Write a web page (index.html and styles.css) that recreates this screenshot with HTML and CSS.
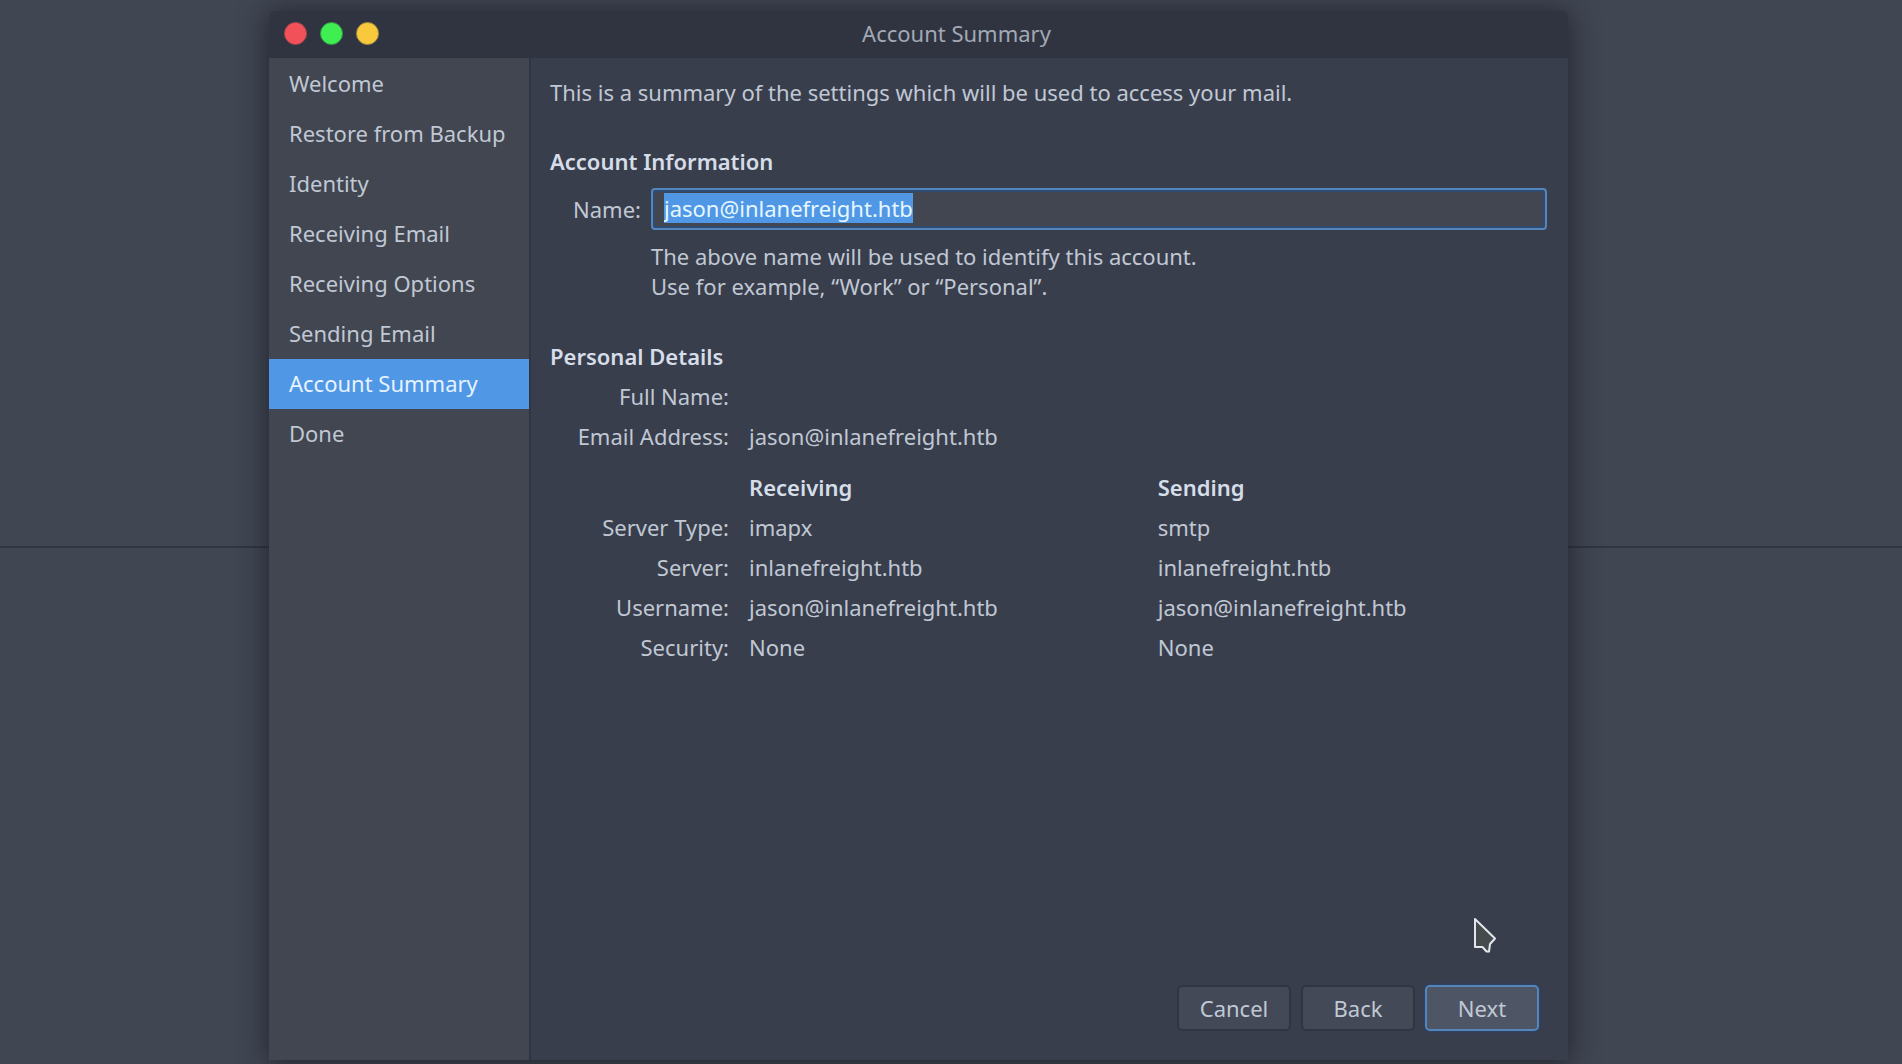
FILE: index.html
```html
<!DOCTYPE html>
<html lang="en">
<head>
<meta charset="utf-8">
<title>Account Summary</title>
<link rel="stylesheet" href="styles.css">
</head>
<body>
<div class="desktop">
  <main class="window">
    <header class="titlebar">
      <div class="controls">
        <button class="control close" aria-label="Close"></button>
        <button class="control zoom" aria-label="Maximize"></button>
        <button class="control minimize" aria-label="Minimize"></button>
      </div>
      <h1 class="title">Account Summary</h1>
    </header>
    <div class="body">
      <nav class="sidebar">
        <a class="step" href="#welcome">Welcome</a>
        <a class="step" href="#restore">Restore from Backup</a>
        <a class="step" href="#identity">Identity</a>
        <a class="step" href="#receiving">Receiving Email</a>
        <a class="step" href="#options">Receiving Options</a>
        <a class="step" href="#sending">Sending Email</a>
        <a class="step active" href="#summary" aria-current="step">Account Summary</a>
        <a class="step" href="#done">Done</a>
      </nav>
      <form class="content">
        <p class="intro">This is a summary of the settings which will be used to access your mail.</p>
        <h2 class="heading">Account Information</h2>
        <div class="field">
          <label class="field-label" for="name">Name:</label>
          <input class="field-input" id="name" type="text" value="jason@inlanefreight.htb" spellcheck="false" autofocus>
          <p class="hint">The above name will be used to identify this account.<br>Use for example, “Work” or “Personal”.</p>
        </div>
        <h2 class="heading">Personal Details</h2>
        <table class="details">
          <tr><th class="label" scope="row">Full Name:</th><td></td></tr>
          <tr><th class="label" scope="row">Email Address:</th><td>jason@inlanefreight.htb</td></tr>
        </table>
        <table class="details servers">
          <tr><td class="label"></td><th class="column receiving" scope="col">Receiving</th><th class="column" scope="col">Sending</th></tr>
          <tr><th class="label" scope="row">Server Type:</th><td>imapx</td><td>smtp</td></tr>
          <tr><th class="label" scope="row">Server:</th><td>inlanefreight.htb</td><td>inlanefreight.htb</td></tr>
          <tr><th class="label" scope="row">Username:</th><td>jason@inlanefreight.htb</td><td>jason@inlanefreight.htb</td></tr>
          <tr><th class="label" scope="row">Security:</th><td>None</td><td>None</td></tr>
        </table>
        <div class="actions">
          <button class="button" type="button">Cancel</button>
          <button class="button" type="button">Back</button>
          <button class="button primary" type="button">Next</button>
        </div>
      </form>
    </div>
    <svg class="pointer" width="24" height="36" viewBox="0 0 24 36" aria-hidden="true">
      <path d="M2 2V30H9.500L13.500 34.500H16L17 27L22 21.500Z" fill="#454a4d" stroke="#e3e7ed" stroke-width="2" stroke-linejoin="round"/>
    </svg>
  </main>
</div>
<script src="script.js"></script>
</body>
</html>
```
FILE: styles.css
```css
* { box-sizing: border-box; }

body {
  margin: 0;
  background: #404652;
  color: #c0c8d4;
  font: 22px/30px "Noto Sans", sans-serif;
}

h1, h2, p { margin: 0; font-size: inherit; }

.desktop {
  display: flex;
  min-height: 100vh;
  padding: 11px 334px 4px 269px;
  background: linear-gradient(#2f3541, #2f3541) 0 546px / 100% 2px no-repeat;
}

.window {
  position: relative;
  display: flex;
  flex: 1;
  flex-direction: column;
  border-radius: 6px 6px 0 0;
  background: #393e4c;
  box-shadow: 0 2px 28px 2px rgba(20, 22, 32, 0.65);
}

.titlebar {
  display: flex;
  align-items: center;
  height: 47px;
  padding: 0 34px 3px 15px;
  border-radius: 6px 6px 0 0;
  background: #2f3440;
}

.controls { display: flex; gap: 13px; }

.control {
  width: 23px;
  height: 23px;
  padding: 0;
  border: 1px solid;
  border-radius: 50%;
}

.close { background: #f15158; border-color: #a8444d; }
.zoom { background: #3fee51; border-color: #349648; }
.minimize { background: #f8c93c; border-color: #a38a3e; }

.title { flex: 1; color: #a2a9b5; font-weight: 400; text-align: center; }

.body { display: flex; flex: 1; }

.sidebar {
  flex: none;
  width: 262px;
  padding-top: 1px;
  border-right: 2px solid #2f3541;
  background: #414651;
}

.step {
  display: block;
  padding: 9px 20px 11px;
  color: inherit;
  text-decoration: none;
  white-space: nowrap;
}

.active { background: #5097e6; color: #e6f3ff; }

.content {
  display: flex;
  flex: 1;
  flex-direction: column;
  padding: 19px 21px 29px 19px;
}

.intro { margin-bottom: 39px; }

.heading { color: #d5dde8; font-weight: 600; }

.field {
  display: grid;
  grid-template-columns: 81px 1fr;
  align-items: center;
  gap: 11px 20px;
  margin: 12px 0 40px;
}

.field-label { justify-self: end; margin-right: -10px; }

.field-input {
  width: 100%;
  height: 42px;
  padding: 0 11px 2px;
  border: 2px solid #5585bd;
  border-radius: 4px;
  outline: 0;
  background: #414651;
  box-shadow: inset 0 0 0 2px #304b70;
  color: inherit;
  font: inherit;
}

.field-input::selection { background: #5097e6; color: #e6f7ff; }

.hint { grid-column: 2; }

.details {
  width: 100%;
  margin-top: 5px;
  border-collapse: collapse;
  table-layout: fixed;
}

.details tr { height: 40px; }
.details td, .details th { padding: 0; text-align: left; }
.details .label {
  width: 199px;
  padding-right: 20px;
  font-weight: 400;
  text-align: right;
}
.details .column { color: #d5dde8; font-weight: 600; }
.details .receiving { width: 41%; }
.servers { margin-top: 11px; }

.actions {
  display: flex;
  justify-content: flex-end;
  gap: 10px;
  margin: auto 8px 0 0;
}

.button {
  width: 114px;
  height: 46px;
  padding: 0;
  border: 2px solid #2f3541;
  border-radius: 5px;
  background: #434957;
  color: inherit;
  font: inherit;
}

.primary { border-color: #5585bd; background: #4e5565; box-shadow: 0 0 2px 1px #2b456b; }

.pointer {
  position: absolute;
  right: 71px;
  bottom: 107px;
}
```
FILE: script.js
```js
const nameInput = document.getElementById("name");
nameInput.focus();
nameInput.select();
```
